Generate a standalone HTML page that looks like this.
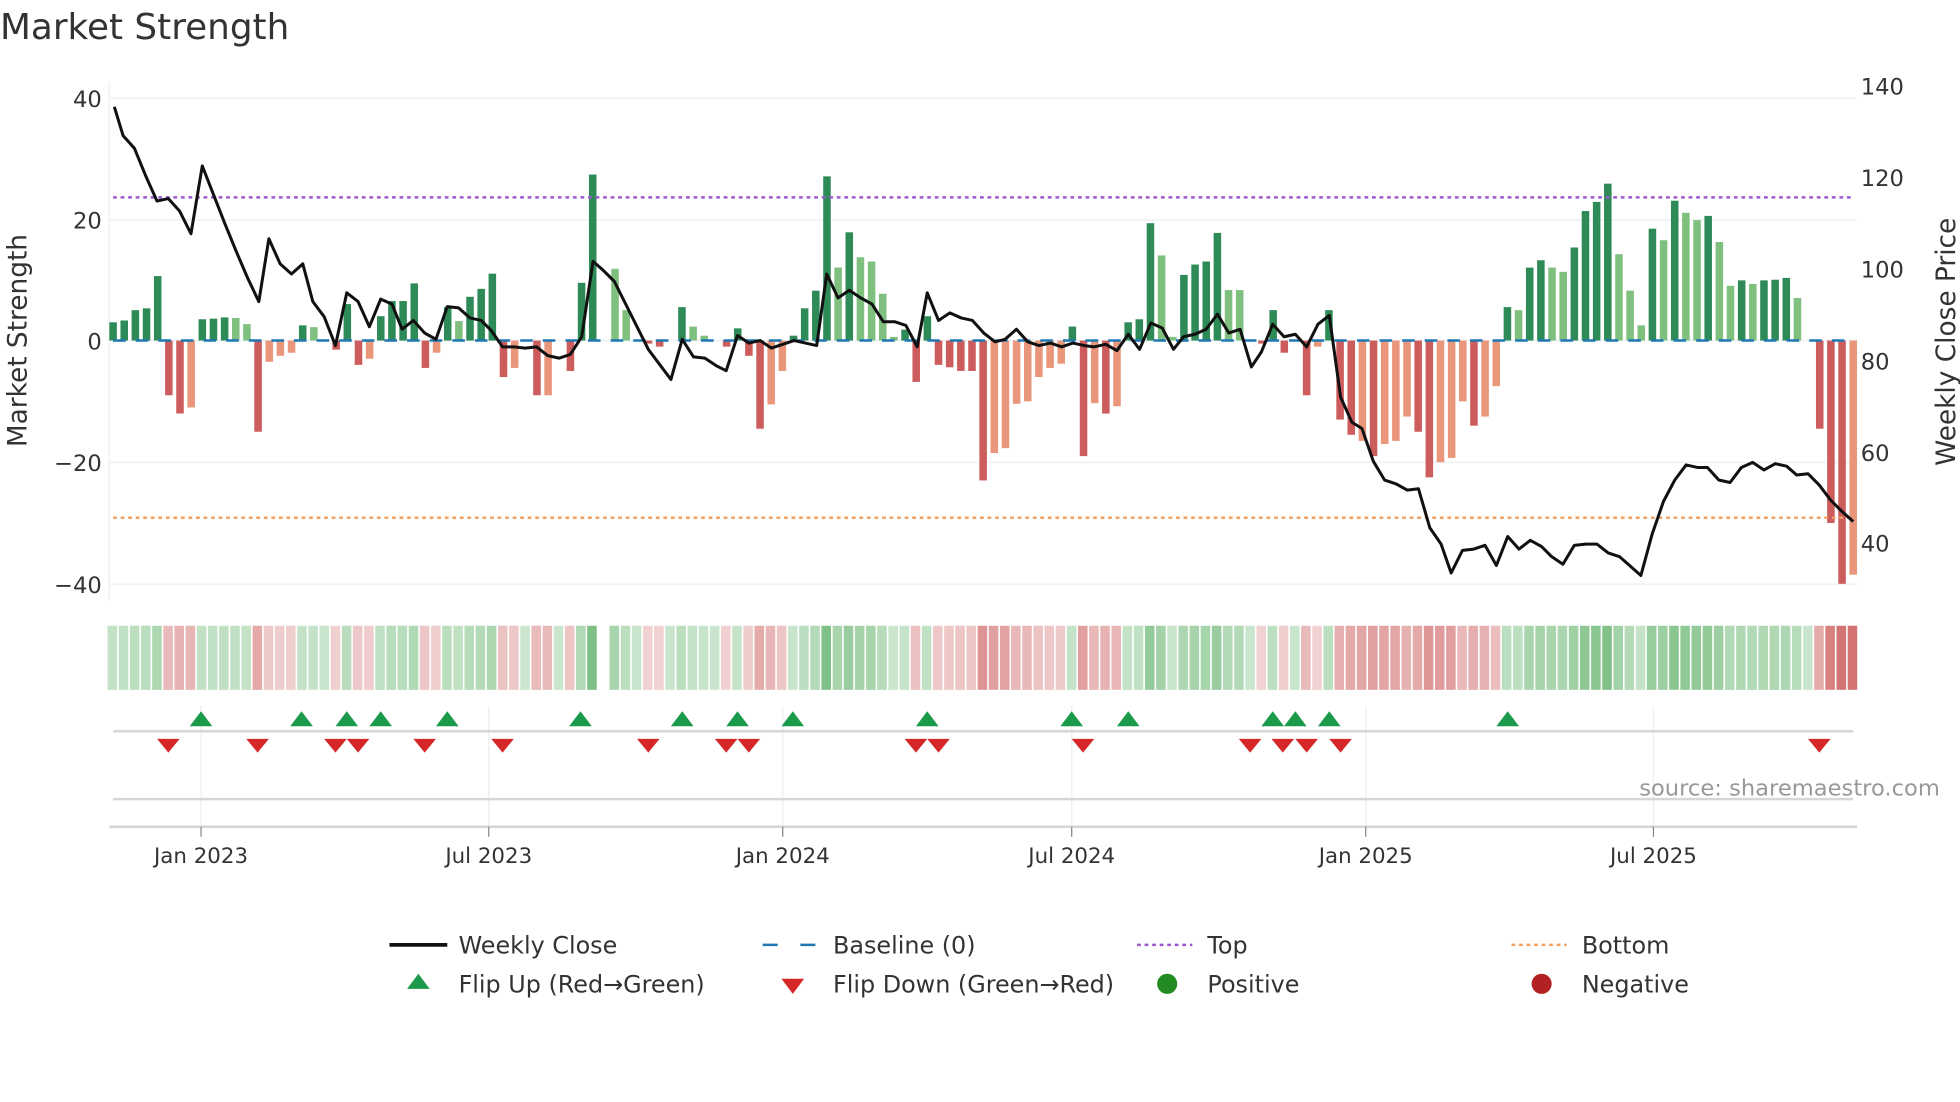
<!DOCTYPE html>
<html><head><meta charset="utf-8"><style>
html,body{margin:0;padding:0;background:#fff;}
svg{display:block;font-family:"DejaVu Sans","Liberation Sans",sans-serif;}
</style></head><body>
<svg id="s" width="1960" height="1102" viewBox="0 0 1560 877" xmlns="http://www.w3.org/2000/svg">
<rect width="1560" height="877" fill="#fff"/>
<text x="0" y="31" font-size="28.5" fill="#333">Market Strength</text>
<g stroke="#eef0f2" stroke-width="1.2">
<line x1="87" y1="78" x2="1478" y2="78"/><line x1="87" y1="175" x2="1478" y2="175"/>
<line x1="87" y1="271" x2="1478" y2="271"/><line x1="87" y1="368" x2="1478" y2="368"/>
<line x1="87" y1="465" x2="1478" y2="465"/>
<line x1="87" y1="65" x2="87" y2="478"/>
</g>
<g font-size="18" fill="#333" text-anchor="end">
<text x="81" y="85">40</text><text x="81" y="182">20</text><text x="81" y="278">0</text>
<text x="81" y="375">−20</text><text x="81" y="472">−40</text>
</g>
<g font-size="18" fill="#333">
<text x="1481" y="75">140</text><text x="1481" y="148">120</text><text x="1481" y="221">100</text>
<text x="1481" y="294">80</text><text x="1481" y="367">60</text><text x="1481" y="439">40</text>
</g>
<text transform="translate(21,271) rotate(-90)" font-size="21" fill="#333" text-anchor="middle">Market Strength</text>
<text transform="translate(1556,272) rotate(-90)" font-size="21" fill="#333" text-anchor="middle">Weekly Close Price</text>
<g id="bars"></g>
<g id="heat"></g>
<line x1="90" y1="271" x2="1475" y2="271" stroke="#1f77b4" stroke-width="2" stroke-dasharray="10,8"/>
<line x1="90" y1="157" x2="1475" y2="157" stroke="#9b59d0" stroke-width="2" stroke-dasharray="3,3"/>
<line x1="90" y1="412" x2="1475" y2="412" stroke="#f0a060" stroke-width="2" stroke-dasharray="3,3"/>
<polyline id="price" fill="none" stroke="#111" stroke-width="2.4" stroke-linejoin="round"/>
<g stroke="#eceef0" stroke-width="1">
<line x1="160" y1="562" x2="160" y2="658"/><line x1="389" y1="562" x2="389" y2="658"/>
<line x1="623" y1="562" x2="623" y2="658"/><line x1="853" y1="562" x2="853" y2="658"/>
<line x1="1087" y1="562" x2="1087" y2="658"/><line x1="1316" y1="562" x2="1316" y2="658"/>
</g>
<line x1="90" y1="582" x2="1475" y2="582" stroke="#d4d6d8" stroke-width="2"/>
<line x1="90" y1="636" x2="1475" y2="636" stroke="#d4d6d8" stroke-width="2"/>
<line x1="87" y1="658" x2="1478" y2="658" stroke="#d4d6d8" stroke-width="2"/>
<g stroke="#888" stroke-width="1">
<line x1="160" y1="658" x2="160" y2="666"/><line x1="389" y1="658" x2="389" y2="666"/>
<line x1="623" y1="658" x2="623" y2="666"/><line x1="853" y1="658" x2="853" y2="666"/>
<line x1="1087" y1="658" x2="1087" y2="666"/><line x1="1316" y1="658" x2="1316" y2="666"/>
</g>
<g id="flips"></g>
<text x="1544" y="633" font-size="18" fill="#999" text-anchor="end">source: sharemaestro.com</text>
<g font-size="17" fill="#333" text-anchor="middle">
<text x="160" y="687">Jan 2023</text><text x="389" y="687">Jul 2023</text><text x="623" y="687">Jan 2024</text>
<text x="853" y="687">Jul 2024</text><text x="1087" y="687">Jan 2025</text><text x="1316" y="687">Jul 2025</text>
</g>
<g font-size="19" fill="#333">
<line x1="310" y1="752" x2="356" y2="752" stroke="#111" stroke-width="3"/>
<text x="365" y="759">Weekly Close</text>
<line x1="607" y1="752" x2="652" y2="752" stroke="#1f77b4" stroke-width="2" stroke-dasharray="12,18"/>
<text x="663" y="759">Baseline (0)</text>
<line x1="905" y1="752" x2="949" y2="752" stroke="#9b59d0" stroke-width="2" stroke-dasharray="3,3"/>
<text x="961" y="759">Top</text>
<line x1="1203" y1="752" x2="1247" y2="752" stroke="#f0a060" stroke-width="2" stroke-dasharray="3,3"/>
<text x="1259" y="759">Bottom</text>
<polygon points="333,775 342,787 324,787" fill="#1a9a4a"/>
<text x="365" y="790">Flip Up (Red→Green)</text>
<polygon points="622,779 640,779 631,791" fill="#d62728"/>
<text x="663" y="790">Flip Down (Green→Red)</text>
<circle cx="929" cy="783" r="8" fill="#228b22"/>
<text x="961" y="790">Positive</text>
<circle cx="1227" cy="783" r="8" fill="#b22222"/>
<text x="1259" y="790">Negative</text>
</g>
</svg>
<script>
var B=[[3,'d'],[3.3,'d'],[5,'d'],[5.3,'d'],[10.6,'d'],[-9,'r'],[-12,'r'],[-11,'s'],[3.5,'d'],[3.6,'d'],[3.8,'d'],[3.7,'l'],[2.7,'l'],[-15,'r'],[-3.5,'s'],[-2.5,'s'],[-2,'s'],[2.5,'d'],[2.2,'l'],[0,'d'],[-1.5,'r'],[6,'d'],[-4,'r'],[-3,'s'],[4,'d'],[6.5,'d'],[6.5,'d'],[9.4,'d'],[-4.5,'r'],[-2,'s'],[5.5,'d'],[3.2,'l'],[7.2,'d'],[8.5,'d'],[11,'d'],[-6,'r'],[-4.5,'s'],[0,'d'],[-9,'r'],[-9,'s'],[0,'d'],[-5,'r'],[9.5,'d'],[27.3,'d'],[0,'d'],[11.8,'l'],[5,'l'],[0,'d'],[-0.5,'r'],[-1,'r'],[0,'d'],[5.5,'d'],[2.3,'l'],[0.8,'l'],[0,'d'],[-1,'r'],[2,'d'],[-2.5,'r'],[-14.5,'r'],[-10.5,'s'],[-5,'s'],[0.8,'d'],[5.3,'d'],[8.2,'d'],[27,'d'],[12,'l'],[17.8,'d'],[13.7,'l'],[13,'l'],[7.7,'l'],[0.6,'l'],[1.8,'d'],[-6.8,'r'],[4,'d'],[-4,'r'],[-4.4,'r'],[-5,'r'],[-5,'r'],[-23,'r'],[-18.5,'s'],[-17.7,'s'],[-10.4,'s'],[-10,'s'],[-6,'s'],[-4.5,'s'],[-3.8,'s'],[2.3,'d'],[-19,'r'],[-10.3,'s'],[-12,'r'],[-10.8,'s'],[3,'d'],[3.5,'d'],[19.3,'d'],[14,'l'],[0.6,'l'],[10.8,'d'],[12.5,'d'],[13,'d'],[17.7,'d'],[8.3,'l'],[8.3,'l'],[0,'d'],[-0.5,'r'],[5,'d'],[-2,'r'],[0,'d'],[-9,'r'],[-1,'s'],[5,'d'],[-13,'r'],[-15.5,'r'],[-16.5,'s'],[-19,'r'],[-17,'s'],[-16.5,'s'],[-12.5,'s'],[-15,'r'],[-22.5,'r'],[-20,'s'],[-19.3,'s'],[-10,'s'],[-14,'r'],[-12.5,'s'],[-7.5,'s'],[5.5,'d'],[5,'l'],[12,'d'],[13.2,'d'],[12,'l'],[11.3,'l'],[15.3,'d'],[21.3,'d'],[22.8,'d'],[25.8,'d'],[14.2,'l'],[8.2,'l'],[2.5,'l'],[18.4,'d'],[16.5,'l'],[23,'d'],[21,'l'],[19.8,'l'],[20.5,'d'],[16.2,'l'],[9,'l'],[9.9,'d'],[9.3,'l'],[9.9,'d'],[10,'d'],[10.3,'d'],[7,'l'],[0,'d'],[-14.5,'r'],[-30,'r'],[-40,'r'],[-38.5,'s']];
var C={d:'#2e8b57',l:'#7fc07f',r:'#cd5c5c',s:'#e9967a'};
var ns='http://www.w3.org/2000/svg',n=B.length,x0=90,x1=1475,st=(x1-x0)/(n-1);
var bg=document.getElementById('bars'),hg=document.getElementById('heat');
function el(t,a,p){var e=document.createElementNS(ns,t);for(var k in a)e.setAttribute(k,a[k]);p.appendChild(e);}
for(var i=0;i<n;i++){var v=B[i][0],x=x0+i*st,h=Math.abs(v)*4.84;
 if(h>0.3)el('rect',{x:x-3,y:v>0?271-h:271,width:6,height:h,fill:C[B[i][1]]},bg);
 var gap=(x>478&&x<486);
 if(!gap){var col=v>=0?'rgba(80,170,90,'+(0.3+0.45*Math.min(1,v/28))+')':'rgba(200,80,80,'+(0.25+0.55*Math.min(1,-v/35))+')';
 el('rect',{x:x-4.4,y:498,width:7.6,height:51,fill:col},hg);}
}
var P=[[91,85],[98,108],[107,118],[116,140],[125,160],[134,158],[143,168],[152,186],[161,132],[170,155],[179,178],[188,200],[197,221],[206,240],[214,190],[223,210],[232,218],[241,210],[249,240],[258,252],[267,275],[276,233],[285,240],[294,260],[303,238],[312,242],[320,262],[329,255],[338,265],[347,270],[356,244],[365,245],[374,253],[383,255],[391,263],[400,276],[409,276],[418,277],[427,276],[436,283],[445,285],[454,282],[463,268],[472,208],[480,215],[489,224],[498,242],[507,260],[516,278],[525,290],[534,302],[543,270],[552,284],[561,285],[570,291],[578,295],[587,267],[596,273],[605,271],[614,277],[623,274],[632,271],[641,273],[650,275],[658,218],[667,237],[676,231],[685,237],[694,242],[703,256],[712,256],[721,259],[730,276],[738,233],[747,255],[756,249],[765,253],[774,255],[783,265],[792,272],[800,270],[809,262],[818,272],[827,275],[836,273],[845,276],[854,273],[863,275],[871,276],[880,274],[889,279],[898,266],[907,278],[916,257],[925,261],[934,278],[942,268],[951,266],[960,262],[969,250],[978,265],[987,262],[996,292],[1004,280],[1013,258],[1022,268],[1031,266],[1040,276],[1049,258],[1058,251],[1067,316],[1076,336],[1084,341],[1093,367],[1102,382],[1111,385],[1120,390],[1129,389],[1138,420],[1147,433],[1155,456],[1164,438],[1173,437],[1182,434],[1191,450],[1200,427],[1209,437],[1218,430],[1227,435],[1235,443],[1244,449],[1253,434],[1262,433],[1271,433],[1280,440],[1289,443],[1297,450],[1306,458],[1315,425],[1324,399],[1333,382],[1342,370],[1351,372],[1359,372],[1368,382],[1377,384],[1386,372],[1395,368],[1404,374],[1413,369],[1422,371],[1430,378],[1439,377],[1448,386],[1457,398],[1466,407],[1475,415]];
document.getElementById('price').setAttribute('points',P.map(function(p){return p.join(',')}).join(' '));
var fg=document.getElementById('flips');
[160,240,276,303,356,462,543,587,631,738,853,898,1013,1031,1058,1200].forEach(function(x){el('polygon',{points:x+',566 '+(x+9)+',578 '+(x-9)+',578',fill:'#1a9a4a'},fg);});
[134,205,267,285,338,400,516,578,596,729,747,862,995,1021,1040,1067,1448].forEach(function(x){el('polygon',{points:(x-9)+',588 '+(x+9)+',588 '+x+',599',fill:'#d62728'},fg);});
</script>
</body></html>
